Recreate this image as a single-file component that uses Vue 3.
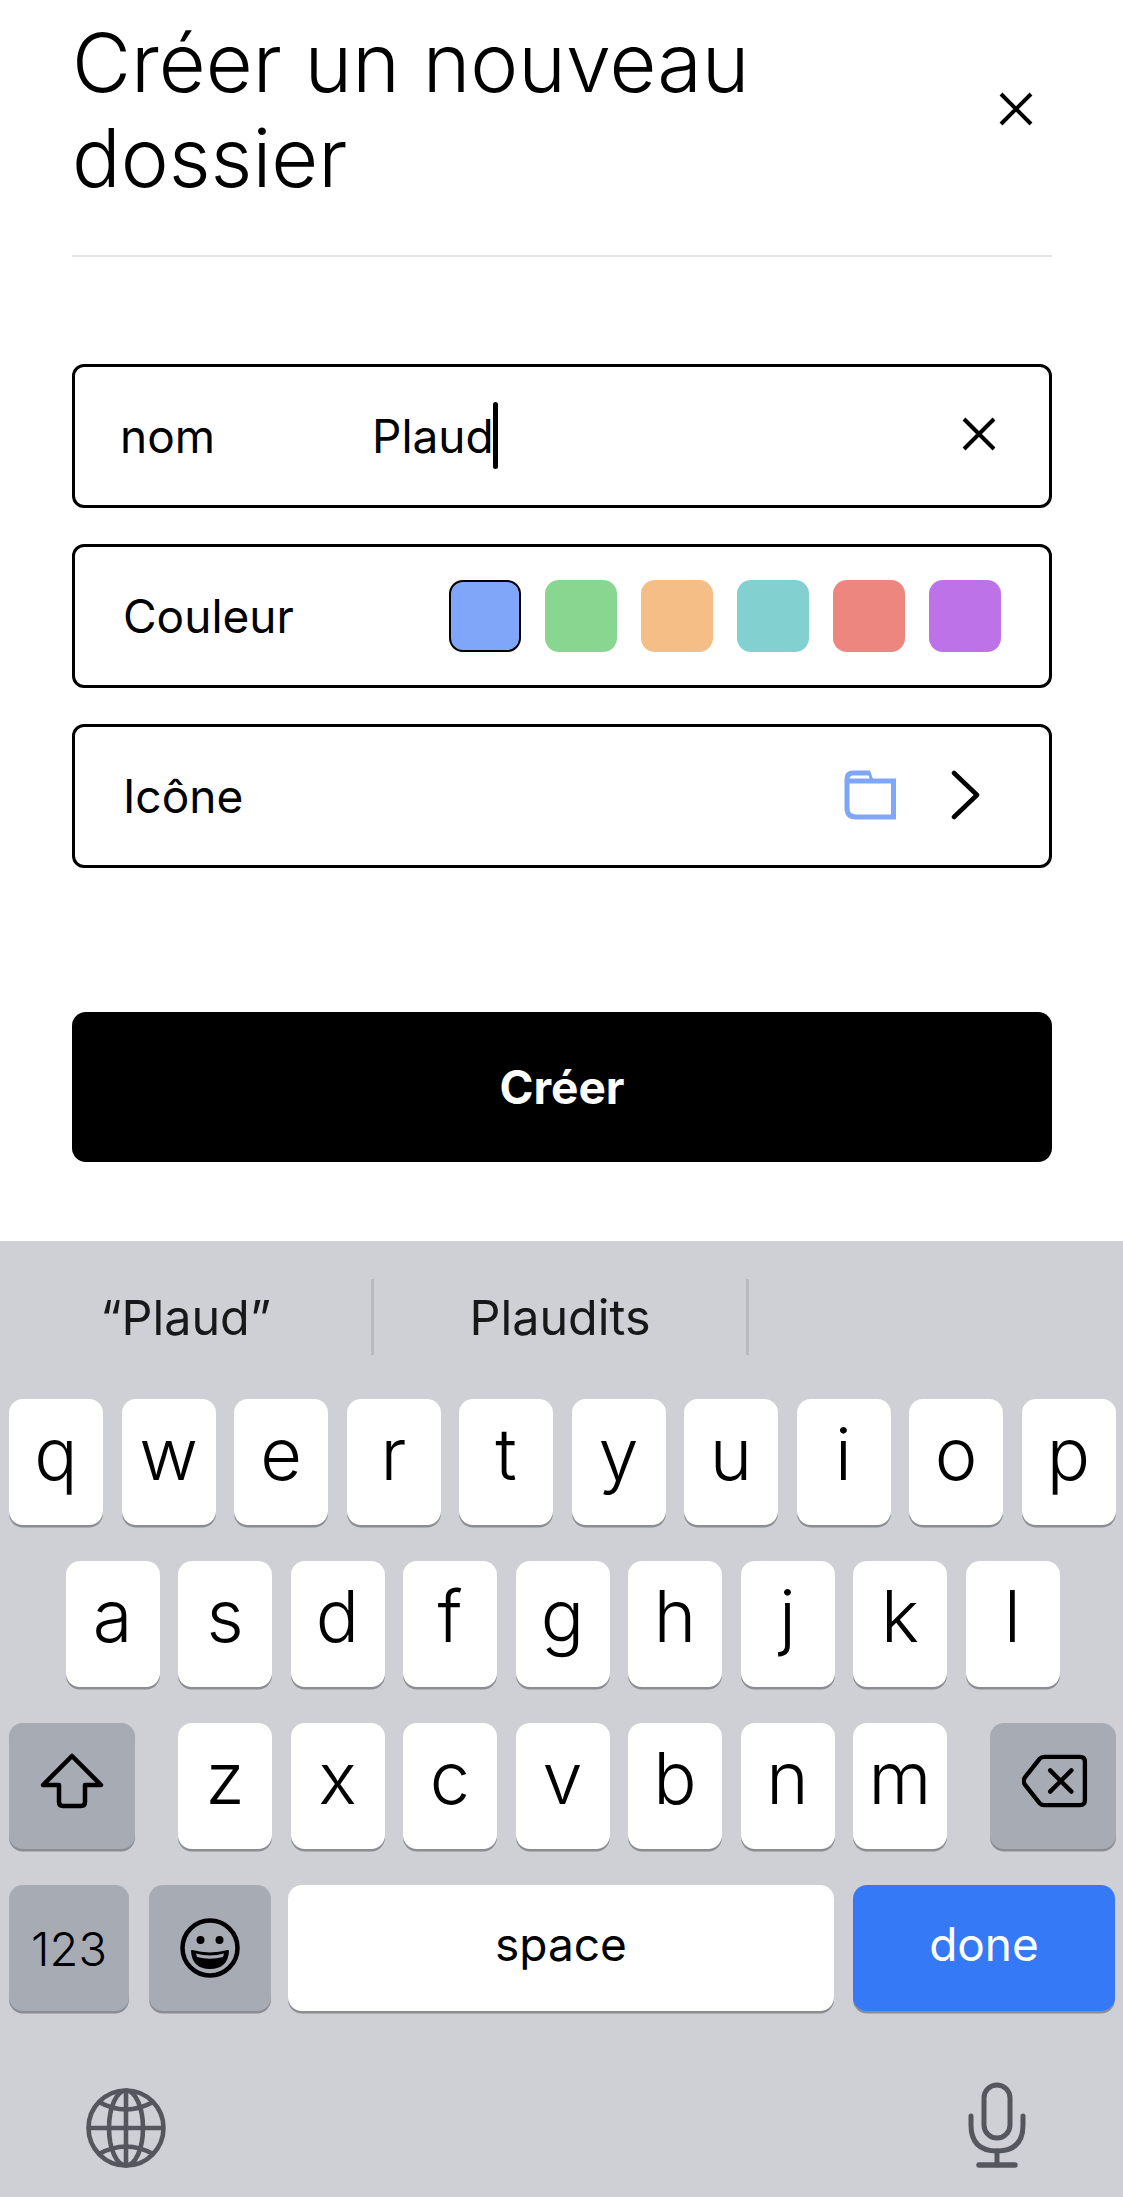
<script setup>
import { ref } from 'vue';

const name = ref('Plaud');
const colors = ['#7fa6f8', '#88d690', '#f4be86', '#82d0d0', '#ee8680', '#bd72e8'];
const selected = ref(0);
const rowOne = 'qwertyuiop'.split('');
const rowTwo = 'asdfghjkl'.split('');
const rowThree = 'zxcvbnm'.split('');
</script>

<template>
  <div class="page">
    <div class="sheet">
      <div class="head">
        <h1 class="title">Créer un nouveau dossier</h1>
        <svg class="close" width="36" height="36" viewBox="0 0 36 36">
          <path d="M3 3 L33 33 M33 3 L3 33" stroke="#000" stroke-width="4" fill="none" />
        </svg>
      </div>

      <div class="form">
        <div class="field">
          <span class="nameLabel">nom</span>
          <span class="nameValue">{{ name }}</span>
          <span class="caret"></span>
          <svg class="clear" width="36" height="36" viewBox="0 0 36 36">
            <path d="M3 3 L33 33 M33 3 L3 33" stroke="#000" stroke-width="4" fill="none" />
          </svg>
        </div>
        <div class="field">
          <span class="label">Couleur</span>
          <div class="swatches">
            <div
              v-for="(c, i) in colors"
              :key="c"
              class="swatch"
              :class="{ active: i === selected }"
              :style="{ backgroundColor: c }"
              @click="selected = i"
            ></div>
          </div>
        </div>
        <div class="field">
          <span class="label">Icône</span>
          <svg class="folder" width="52" height="50" viewBox="0 0 52 50">
            <path d="M26 3 L9 3 Q3 3 3 9 L3 38 Q3 47 12 47 L49.5 47 L49.5 11 L3 11" stroke="#7fa6f8" stroke-width="5" fill="none" />
            <path d="M25 2 L28 11" stroke="#7fa6f8" stroke-width="3" fill="none" />
          </svg>
          <svg class="chevron" width="30" height="50" viewBox="0 0 30 50">
            <path d="M3 3 L26 25 L3 47" stroke="#000" stroke-width="4.5" fill="none" stroke-linecap="round" stroke-linejoin="round" />
          </svg>
        </div>
      </div>

      <button class="create">Créer</button>
    </div>

    <div class="keyboard">
      <div class="suggestions">
        <div class="suggestion">“Plaud”</div>
        <div class="suggestion">Plaudits</div>
        <div class="suggestion last"></div>
      </div>

      <div class="keys">
        <div class="row">
          <div class="key" v-for="k in rowOne" :key="k">{{ k }}</div>
        </div>
        <div class="row centered">
          <div class="key" v-for="k in rowTwo" :key="k">{{ k }}</div>
        </div>
        <div class="row between">
          <div class="key dark wide">
            <svg width="66" height="58" viewBox="0 0 66 58">
              <path d="M33 4 L62 33 L46 33 L46 50 Q46 54 42 54 L24 54 Q20 54 20 50 L20 33 L4 33 Z" stroke="#000" stroke-width="4.5" fill="none" stroke-linejoin="round" />
            </svg>
          </div>
          <div class="letters">
            <div class="key" v-for="k in rowThree" :key="k">{{ k }}</div>
          </div>
          <div class="key dark wide">
            <svg class="backspace" width="66" height="54" viewBox="0 0 68 56">
              <path d="M23 3 L60 3 Q65 3 65 8 L65 48 Q65 53 60 53 L23 53 Q20 53 18 51 L3 32 Q0 28 3 24 L18 5 Q20 3 23 3 Z" stroke="#000" stroke-width="4.5" fill="none" stroke-linejoin="round" />
              <path d="M29 17 L51 39 M51 17 L29 39" stroke="#000" stroke-width="4.5" fill="none" stroke-linecap="round" />
            </svg>
          </div>
        </div>
        <div class="row bottomRow">
          <div class="key dark numbers">123</div>
          <div class="key dark emoji">
            <svg width="60" height="60" viewBox="0 0 60 60">
              <circle cx="30" cy="30" r="27.5" stroke="#000" stroke-width="4.5" fill="none" />
              <circle cx="20.5" cy="22" r="4" fill="#000" />
              <circle cx="39.5" cy="22" r="4" fill="#000" />
              <path d="M12 33 Q30 38 48 33 Q47 50 30 50 Q13 50 12 33 Z" fill="#000" stroke="#000" stroke-width="2" stroke-linejoin="round" />
              <path d="M16 35.5 Q30 39.5 44 35.5 L43 39 Q30 42.5 17 39 Z" fill="#a7abb4" />
            </svg>
          </div>
          <div class="key space">space</div>
          <div class="key done">done</div>
        </div>
      </div>

      <div class="system">
        <svg width="80" height="80" viewBox="0 0 80 80">
          <g stroke="#54575e" stroke-width="4.6" fill="none">
            <circle cx="40" cy="40" r="37.5" />
            <ellipse cx="40" cy="40" rx="17" ry="37.5" />
            <path d="M40 2.5 L40 77.5 M2.5 40 L77.5 40" />
            <path d="M13 14 Q40 29 67 14 M13 66 Q40 51 67 66" />
          </g>
        </svg>
        <svg width="58" height="86" viewBox="0 0 58 86">
          <g stroke="#54575e" stroke-width="5" fill="none" stroke-linecap="round">
            <rect x="16" y="3" width="26" height="53" rx="13" />
            <path d="M3 34 L3 43 Q3 69 29 69 Q55 69 55 43 L55 34" />
            <path d="M29 69 L29 83" />
            <path d="M11 83 L47 83" stroke-width="5.5" />
          </g>
        </svg>
      </div>
    </div>
  </div>
</template>

<style>
html, body {
  background: #fff;
}
</style>

<style scoped>
.page {
  width: 1123px;
  height: 2197px;
  display: flex;
  flex-direction: column;
  overflow: hidden;
  font-family: Inter, "Liberation Sans", sans-serif;
  color: #000;
}

.sheet {
  height: 1241px;
  padding: 16px 71px 0 72px;
  box-sizing: border-box;
  background: #fff;
}

.head {
  height: 239px;
  display: flex;
  align-items: center;
  justify-content: space-between;
  padding-right: 18px;
  border-bottom: 2px solid #e3e3e8;
  box-sizing: content-box;
}

.title {
  width: 800px;
  margin: 0;
  font-size: 81px;
  font-weight: 300;
  line-height: 95px;
  align-self: flex-start;
}

.close {
  margin-top: -54px;
}

.form {
  margin-top: 107px;
  display: flex;
  flex-direction: column;
  gap: 36.5px;
}

.field {
  height: 143.5px;
  box-sizing: border-box;
  border: 3px solid #000;
  border-radius: 12px;
  display: flex;
  align-items: center;
  padding: 0 48px 0 48px;
  font-size: 46px;
}

.nameLabel {
  width: 252px;
  flex: none;
  margin-left: -3px;
}

.nameValue {
  flex: none;
}

.caret {
  width: 5px;
  height: 67px;
  border-radius: 3px;
  background: #000;
  margin-left: -1px;
}

.clear {
  margin-left: auto;
  margin-right: 4px;
  margin-top: -3px;
}

.label {
  flex: 1;
}

.swatches {
  display: flex;
  gap: 24px;
}

.swatch {
  width: 72px;
  height: 72px;
  border-radius: 14px;
  box-sizing: border-box;
}

.swatch.active {
  border: 2.5px solid #000;
}

.folder {
  margin-right: 55px;
  margin-top: -2px;
}

.chevron {
  margin-right: 20px;
  margin-top: -1px;
}

.create {
  display: block;
  width: 100%;
  height: 150px;
  margin-top: 144.5px;
  border: none;
  border-radius: 14px;
  background: #000;
  color: #fff;
  font-family: inherit;
  font-size: 46px;
  font-weight: 700;
}

.keyboard {
  flex: 1;
  background: #ced0d5;
  display: flex;
  flex-direction: column;
}

.suggestions {
  display: flex;
  padding-top: 38px;
  height: 76px;
}

.suggestion {
  width: 375px;
  height: 76px;
  box-sizing: border-box;
  border-right: 3px solid #b8bbc1;
  display: flex;
  align-items: center;
  justify-content: center;
  font-size: 48.5px;
  font-weight: 400;
  color: #17181a;
}

.suggestion.last {
  border-right: none;
}

.keys {
  margin-top: 44px;
  padding: 0 7px 0 9px;
  display: flex;
  flex-direction: column;
  gap: 36px;
}

.row {
  display: flex;
  gap: 18.5px;
}

.row.centered {
  justify-content: center;
}

.row.between {
  justify-content: space-between;
}

.letters {
  display: flex;
  gap: 18.5px;
}

.key {
  width: 94px;
  height: 126px;
  flex: none;
  border-radius: 14px;
  background: #fff;
  box-shadow: 0 2.5px 0 #8b8d92;
  display: flex;
  align-items: center;
  justify-content: center;
  font-size: 72px;
  font-weight: 350;
  line-height: 1;
  padding-bottom: 16px;
  box-sizing: border-box;
}

.key.dark {
  background: #a7abb4;
}

.key.wide {
  width: 126px;
  padding-bottom: 10px;
}

.backspace {
  margin-left: 4px;
}

.bottomRow {
  gap: 0;
}

.numbers {
  width: 120px;
  font-size: 47px;
  padding-bottom: 0;
}

.emoji {
  width: 122px;
  margin-left: 20px;
  padding-bottom: 0;
}

.space {
  width: 546px;
  margin-left: 17px;
  font-size: 46px;
  font-weight: 400;
  padding-bottom: 9px;
}

.done {
  width: 262px;
  margin-left: 19px;
  background: #3579f6;
  color: #fff;
  font-size: 46px;
  font-weight: 400;
  padding-bottom: 9px;
}

.system {
  margin-top: 71px;
  padding: 0 97px 0 86px;
  display: flex;
  justify-content: space-between;
  align-items: flex-end;
}
</style>
